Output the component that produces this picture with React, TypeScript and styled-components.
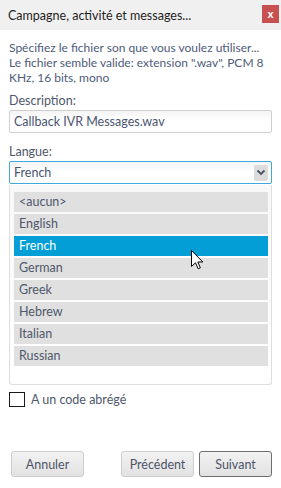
import React, { useState } from 'react'
import styled, { createGlobalStyle } from 'styled-components'

const GlobalStyle = createGlobalStyle`
  html, body {
    margin: 0;
    padding: 0;
    background: #ffffff;
  }
  body {
    font-family: 'Lato', 'Open Sans', 'Liberation Sans', sans-serif;
    font-size: 12px;
  }
`

const Window = styled.div`
  position: relative;
  width: 281px;
  height: 488px;
  background: #ffffff;
  display: flex;
  flex-direction: column;
  overflow: hidden;
`

const TitleBar = styled.div`
  height: 30px;
  flex: none;
  background: #f0f0f0;
  display: flex;
  align-items: center;
  justify-content: space-between;
  padding: 0 2px 0 8px;
  color: #1e1e1e;
  font-size: 12.5px;
`

const CloseButton = styled.button`
  width: 17px;
  height: 18px;
  margin-bottom: 2px;
  border: none;
  padding: 0;
  background: #c75050;
  color: #ffffff;
  font-weight: bold;
  font-size: 11px;
  line-height: 16px;
  font-family: 'Liberation Sans', sans-serif;
`

const Content = styled.div`
  flex: 1;
  display: flex;
  flex-direction: column;
  padding: 10px 9px 11px 9px;
`

const Intro = styled.p`
  margin: 0 0 8px 0;
  line-height: 15px;
  color: #4e5b7a;
`

const Label = styled.label`
  display: block;
  line-height: 15px;
  color: #4f576a;
  margin-bottom: 2px;
  font-size: 12.5px;
`

const Field = styled.div<{ $focused?: boolean }>`
  box-sizing: border-box;
  height: 23px;
  display: flex;
  align-items: center;
  padding: 0 3px 0 4px;
  border: 1px solid ${(p) => (p.$focused ? '#3fa8dc' : '#cfcfcf')};
  border-radius: 2px;
  background: linear-gradient(#f4f4f4, #ffffff 45%);
  color: #4a5470;
  font-size: 12.5px;
`

const FieldText = styled.span`
  flex: 1;
`

const Gap = styled.div<{ $h: number }>`
  height: ${(p) => p.$h}px;
  flex: none;
`

const ArrowButton = styled.span`
  width: 14px;
  height: 16px;
  border-radius: 2px;
  background: #dcdcdc;
  display: flex;
  align-items: center;
  justify-content: center;
`

const ListBox = styled.div`
  position: relative;
  box-sizing: border-box;
  margin-top: 1px;
  height: 200px;
  border: 1px solid #dedede;
  border-top: none;
  border-radius: 0 0 3px 3px;
  background: linear-gradient(#f8f8f8, #ffffff);
  padding: 7px 3px 0 4px;
  display: flex;
  flex-direction: column;
  gap: 2px;
`

const Option = styled.div<{ $selected?: boolean }>`
  height: 20px;
  line-height: 20px;
  padding-left: 5px;
  background: ${(p) => (p.$selected ? '#029ed5' : '#e0e0e0')};
  color: ${(p) => (p.$selected ? '#ffffff' : '#4f586b')};
  font-size: 12.5px;
`

const Cursor = styled.svg`
  position: absolute;
  left: 181px;
  top: 65px;
  pointer-events: none;
`

const CheckRow = styled.label`
  display: flex;
  align-items: center;
  gap: 6px;
  margin-top: 7px;
  color: #4f586b;
  font-size: 12.5px;
`

const CheckBox = styled.span`
  box-sizing: border-box;
  width: 16px;
  height: 15px;
  border: 1px solid #1a1a1a;
  background: #ffffff;
`

const Footer = styled.div`
  margin-top: auto;
  display: flex;
  align-items: center;
  padding-left: 2px;
  gap: 5px;
`

const Button = styled.button<{ $default?: boolean }>`
  width: 73px;
  height: 26px;
  box-sizing: border-box;
  border: 1px solid ${(p) => (p.$default ? '#6e6e6e' : '#cdcdcd')};
  border-radius: 3px;
  background: linear-gradient(#f2f2f2, #e2e2e2);
  color: #4e5568;
  font-family: inherit;
  font-size: 12.5px;
  padding: 0;
`

const Spacer = styled.div`
  flex: 1;
`

const languages = ['<aucun>', 'English', 'French', 'German', 'Greek', 'Hebrew', 'Italian', 'Russian']

export default function App() {
  const [lang, setLang] = useState('French')

  return (
    <>
      <GlobalStyle />
      <Window>
        <TitleBar>
          <span>Campagne, activité et messages...</span>
          <CloseButton>x</CloseButton>
        </TitleBar>
        <Content>
          <Intro>
            Spécifiez le fichier son que vous voulez utiliser...
            <br />
            Le fichier semble valide: extension ".wav", PCM 8
            <br />
            KHz, 16 bits, mono
          </Intro>
          <Label>Description:</Label>
          <Field>
            <FieldText>Callback IVR Messages.wav</FieldText>
          </Field>
          <Gap $h={11} />
          <Label>Langue:</Label>
          <Field $focused>
            <FieldText>{lang}</FieldText>
            <ArrowButton>
              <svg width="10" height="7" viewBox="0 0 10 7">
                <path d="M1.5 1.5 L5 5 L8.5 1.5" fill="none" stroke="#4a5266" strokeWidth="1.8" />
              </svg>
            </ArrowButton>
          </Field>
          <ListBox>
            {languages.map((l) => (
              <Option key={l} $selected={l === lang} onClick={() => setLang(l)}>
                {l}
              </Option>
            ))}
            <Cursor width="13" height="20" viewBox="0 0 13 20">
              <path
                d="M0.5 0.5 L0.5 16.5 L4.5 12.8 L7.2 18.8 L9.4 17.8 L6.8 12 L11.8 12 Z"
                fill="#ffffff"
                stroke="#000000"
                strokeWidth="1"
                strokeLinejoin="miter"
              />
            </Cursor>
          </ListBox>
          <CheckRow>
            <CheckBox />
            A un code abrégé
          </CheckRow>
          <Footer>
            <Button>Annuler</Button>
            <Spacer />
            <Button>Précédent</Button>
            <Button $default>Suivant</Button>
          </Footer>
        </Content>
      </Window>
    </>
  )
}
